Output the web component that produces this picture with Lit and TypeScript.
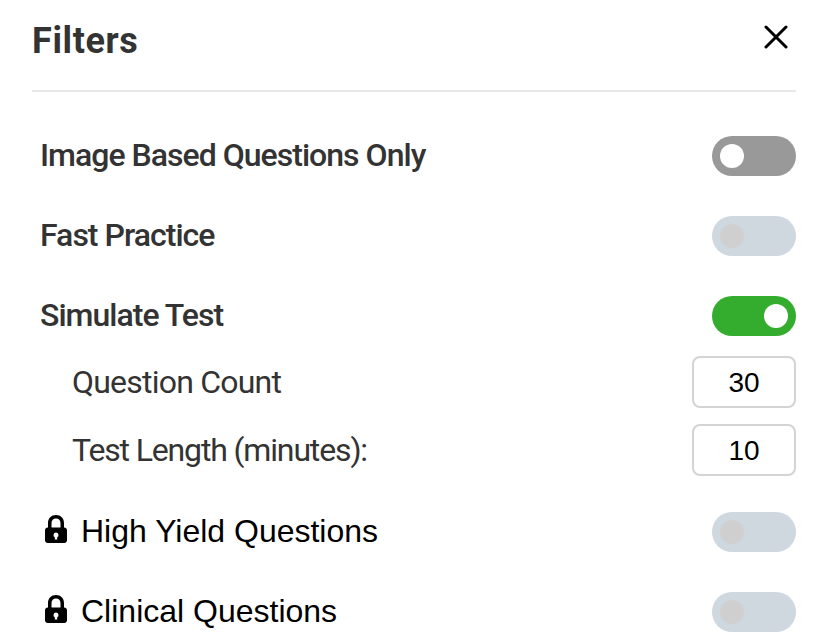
import { LitElement, html, css, svg } from "lit";
import { customElement } from "lit/decorators.js";

const lock = svg`<path d="M11 0C6.400 0 3 3.200 3 8V12.500H2.800C1.200 12.500 0 13.700 0 15.300V25.200C0 26.800 1.200 28 2.800 28H19.200C20.800 28 22 26.800 22 25.200V15.300C22 13.700 20.800 12.500 19.200 12.500H19V8C19 3.200 15.600 0 11 0ZM11 3.400C13.800 3.400 15.500 5.200 15.500 8V12.500H6.500V8C6.500 5.200 8.200 3.400 11 3.400ZM11 17.600A2.500 2.500 0 0 1 12.200 22.300V24.500H9.800V22.300A2.500 2.500 0 0 1 11 17.600Z" fill-rule="evenodd" fill="#000"/>`;

@customElement("app-root")
export class AppRoot extends LitElement {
  static styles = css`
    :host { display: block; width: 828px; height: 642px; background: #fff; overflow: hidden; font-family: Roboto, sans-serif; color: #333; }
    .panel { padding: 0 32px; }
    .head { display: flex; justify-content: space-between; align-items: flex-start; height: 90px; border-bottom: 2px solid #e8e8e8; box-sizing: content-box; }
    h1 { margin: 21px 0 0; font-size: 36px; line-height: 40px; font-weight: 700; letter-spacing: 0.62px; }
    .close { margin: 25px 8px 0 0; width: 24px; height: 24px; display: block; }
    .list { padding: 44px 0 0 8px; display: flex; flex-direction: column; }
    .row { display: flex; justify-content: space-between; align-items: center; height: 40px; margin-bottom: 40px; font-size: 32px; font-weight: 500; letter-spacing: -0.98px; }
    .row > span { margin-top: -2px; }
    .row.sim { margin-bottom: 20px; }
    .sub { display: flex; justify-content: space-between; align-items: center; height: 52px; margin-bottom: 16px; padding-left: 32px; font-size: 32px; font-weight: 400; }
    .qc { letter-spacing: -0.78px; }
    .tl { letter-spacing: -1.15px; }
    .sub.last { margin-bottom: 36px; }
    .input { box-sizing: border-box; width: 104px; height: 52px; padding-top: 1px; border: 2px solid #d4d4d4; border-radius: 8px; display: flex; align-items: center; justify-content: center; font: 400 28px "Liberation Sans", Arial, sans-serif; color: #000; letter-spacing: 0; }
    .locked { font: 400 32px "Liberation Sans", Arial, sans-serif; color: #000; letter-spacing: 0; }
    .lab { display: flex; align-items: center; gap: 14px; }
    .lab svg { width: 22px; height: 28px; display: block; margin: -4px 0 0 5px; }
    .t { box-sizing: border-box; width: 84px; height: 40px; border-radius: 20px; background: #999; display: flex; align-items: center; padding: 0 8px; }
    .t i { display: block; width: 24px; height: 24px; border-radius: 50%; background: #fff; }
    .t.on { background: #34ad2f; justify-content: flex-end; }
    .t.off { background: #ced8de; }
    .t.off i { background: #cfcfcf; }
  `;

  private tog(k = "") { return html`<div class="t ${k}"><i></i></div>`; }

  render() {
    return html`<div class="panel">
      <div class="head">
        <h1>Filters</h1>
        <svg class="close" viewBox="0 0 24 24"><path d="M2 2L22 22M22 2L2 22" stroke="#000" stroke-width="3" stroke-linecap="round" fill="none"/></svg>
      </div>
      <div class="list">
        <div class="row"><span>Image Based Questions Only</span>${this.tog()}</div>
        <div class="row"><span>Fast Practice</span>${this.tog("off")}</div>
        <div class="row sim"><span>Simulate Test</span>${this.tog("on")}</div>
        <div class="sub"><span class="qc">Question Count</span><div class="input">30</div></div>
        <div class="sub last"><span class="tl">Test Length (minutes):</span><div class="input">10</div></div>
        <div class="row locked"><span class="lab"><svg viewBox="0 0 22 28">${lock}</svg>High Yield Questions</span>${this.tog("off")}</div>
        <div class="row locked"><span class="lab"><svg viewBox="0 0 22 28">${lock}</svg>Clinical Questions</span>${this.tog("off")}</div>
      </div>
    </div>`;
  }
}
